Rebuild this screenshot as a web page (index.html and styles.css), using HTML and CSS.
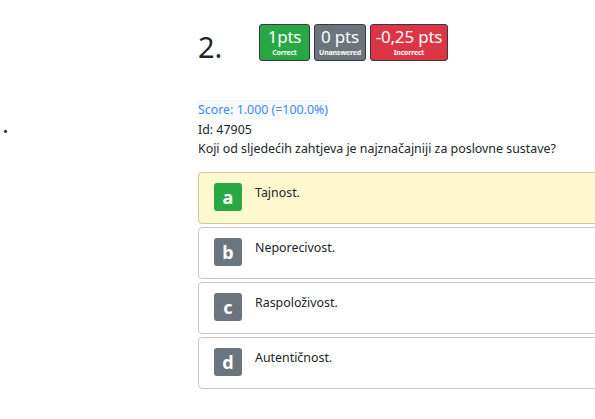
FILE: index.html
```html
<!DOCTYPE html>
<html>
<head>
<meta charset="utf-8">
<link rel="stylesheet" href="styles.css">
</head>
<body>
<div class="header">
  <div class="qnum">2.</div>
  <div class="badges">
    <div class="badge green"><span class="big">1pts</span><span class="small">Correct</span></div>
    <div class="badge gray"><span class="big">0 pts</span><span class="small">Unanswered</span></div>
    <div class="badge red"><span class="big">-0,25 pts</span><span class="small">Incorrect</span></div>
  </div>
</div>
<div class="main">
  <div class="bulletcol"><span class="bullet">•</span></div>
  <div class="content">
    <div class="score">Score: 1.000 (=100.0%)</div>
    <div class="line">Id: 47905</div>
    <div class="line">Koji od sljedećih zahtjeva je najznačajniji za poslovne sustave?</div>
    <div class="options">
      <div class="opt selected"><span class="letter lgreen">a</span><span class="otext">Tajnost.</span></div>
      <div class="opt"><span class="letter">b</span><span class="otext">Neporecivost.</span></div>
      <div class="opt"><span class="letter">c</span><span class="otext">Raspoloživost.</span></div>
      <div class="opt"><span class="letter">d</span><span class="otext">Autentičnost.</span></div>
    </div>
  </div>
</div>
</body>
</html>
```

FILE: styles.css
```css
html, body {
  margin: 0;
  padding: 0;
  overflow: hidden;
  background: #fff;
  font-family: "Noto Sans", "Open Sans", sans-serif;
  color: #212529;
}
.header {
  display: flex;
  align-items: flex-start;
  padding: 23px 0 0 198px;
  height: 52px;
}
.qnum {
  font-size: 29px;
  line-height: 38px;
  padding-top: 5px;
  width: 61px;
  color: #212529;
}
.badges {
  display: flex;
  gap: 4px;
  padding-top: 1px;
}
.badge {
  display: flex;
  flex-direction: column;
  align-items: center;
  box-sizing: border-box;
  height: 37px;
  border: 1px solid #343a40;
  border-radius: 3px;
  color: #fff;
}
.badge.green { background: #28a745; width: 51px; }
.badge.gray { background: #6c757d; width: 52px; }
.badge.red { background: #dc3545; width: 78px; }
.big {
  font-size: 17px;
  line-height: 23px;
  white-space: nowrap;
  letter-spacing: -0.2px;
}
.small {
  font-size: 7px;
  font-weight: bold;
  line-height: 9px;
  white-space: nowrap;
  letter-spacing: -0.2px;
}
.main {
  display: grid;
  grid-template-columns: 198px 420px;
  padding-top: 25px;
}
.bulletcol {
  padding-top: 22px;
  padding-left: 3px;
  font-size: 13px;
  line-height: 19px;
}
.content {
  font-size: 12.4px;
  line-height: 19.5px;
}
.score {
  display: inline-block;
  background: #f8f9fa;
  color: #3b8cf3;
}
.line {
  color: #212529;
}
.options {
  display: flex;
  flex-direction: column;
  gap: 3px;
  padding-top: 13px;
}
.opt {
  display: flex;
  align-items: flex-start;
  height: 52px;
  padding: 10px 0 0 15px;
  box-sizing: border-box;
  border: 1px solid #c8c8c8;
  border-radius: 4px;
  background: #fff;
}
.opt.selected {
  background: #fdf8cd;
  border-color: #cfc9a0;
}
.letter {
  display: flex;
  align-items: center;
  justify-content: center;
  width: 28px;
  height: 28px;
  border-radius: 3px;
  background: #6c757d;
  color: #fff;
  font-weight: bold;
  font-size: 18px;
  line-height: 28px;
}
.letter.lgreen { background: #28a745; }
.otext {
  padding-left: 13px;
  font-size: 12.4px;
  line-height: 16px;
  padding-top: 2px;
}
```
